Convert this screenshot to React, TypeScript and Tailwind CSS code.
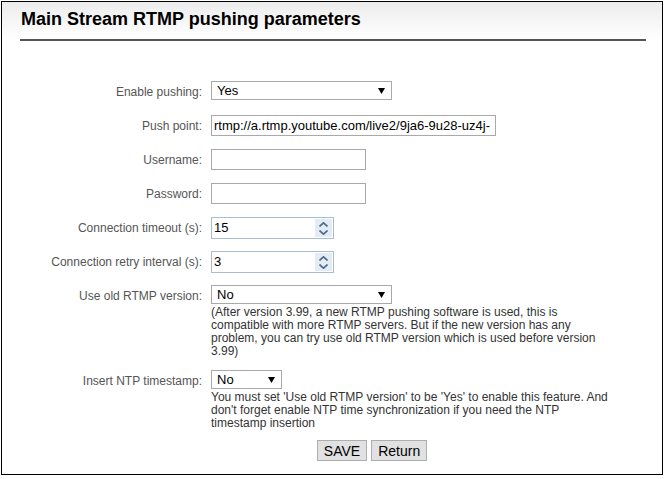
import React from 'react';

function Caret() {
  return (
    <svg width="7" height="6" viewBox="0 0 7 6" className="shrink-0">
      <path d="M0 0 H7 L3.5 6 Z" fill="#000" />
    </svg>
  );
}

function FakeSelect({ value, width }: { value: string; width: string }) {
  return (
    <div
      className={`${width} h-[19px] border border-[#a9a9a9] bg-white flex items-center justify-between pl-[5px] pr-[6px] text-[13px] text-black`}
    >
      <span className="leading-none">{value}</span>
      <Caret />
    </div>
  );
}

function NumberBox({ value }: { value: string }) {
  return (
    <div className="w-[123px] h-[22px] border border-[#a9bcd0] bg-white flex text-[13px] text-black">
      <div className="flex-1 flex items-center pl-[2px]">{value}</div>
      <div className="w-[17px] my-[1px] mr-[1px] bg-[#e3ebf5] flex flex-col items-center justify-center gap-[3px]">
        <svg width="9" height="5" viewBox="0 0 9 5">
          <path d="M0.5 4.5 L4.5 0.8 L8.5 4.5" stroke="#4e6a8c" strokeWidth="1.6" fill="none" />
        </svg>
        <svg width="9" height="5" viewBox="0 0 9 5">
          <path d="M0.5 0.5 L4.5 4.2 L8.5 0.5" stroke="#4e6a8c" strokeWidth="1.6" fill="none" />
        </svg>
      </div>
    </div>
  );
}

function TextBox({ value, width }: { value?: string; width: string }) {
  return (
    <div className={`${width} h-[21px] border border-[#a9a9a9] bg-white overflow-hidden flex items-center pl-[2px] text-[13px] text-black whitespace-nowrap`}>
      {value}
    </div>
  );
}

function Row({ label, children, className = '' }: { label: string; children: React.ReactNode; className?: string }) {
  return (
    <div className={`flex ${className}`}>
      <div className="w-[201px] shrink-0 text-right text-[12px] text-[#555] pr-[1px] pt-[2px]">{label}</div>
      <div className="ml-[8px]">{children}</div>
    </div>
  );
}

export default function App() {
  return (
    <div className="w-[665px] h-[479px] bg-white pt-[1px] pl-[1px]" style={{ fontFamily: '"Liberation Sans", Arial, sans-serif' }}>
      <div className="w-[662px] h-[474px] border border-black flex flex-col">
        <div className="bg-gradient-to-b from-[#ececec] to-white h-[37px] pl-[19px] pr-[16px] pt-[7px]">
          <h1 className="text-[18px] font-bold text-black leading-[20px]">Main Stream RTMP pushing parameters</h1>
        </div>
        <div className="mx-[18px] mr-[16px] h-[2px] bg-[#555]" />

        <div className="mt-[40px] flex flex-col">
          <Row label="Enable pushing:" className="h-[34px]">
            <FakeSelect value="Yes" width="w-[181px]" />
          </Row>
          <Row label="Push point:" className="h-[34px]">
            <TextBox value="rtmp://a.rtmp.youtube.com/live2/9ja6-9u28-uz4j-" width="w-[285px]" />
          </Row>
          <Row label="Username:" className="h-[34px]">
            <TextBox width="w-[155px]" />
          </Row>
          <Row label="Password:" className="h-[34px]">
            <TextBox width="w-[155px]" />
          </Row>
          <Row label="Connection timeout (s):" className="h-[34px]">
            <NumberBox value="15" />
          </Row>
          <Row label="Connection retry interval (s):" className="h-[34px]">
            <NumberBox value="3" />
          </Row>
          <Row label="Use old RTMP version:">
            <FakeSelect value="No" width="w-[181px]" />
            <p className="text-[12px] leading-[13px] text-[#333] mt-[2px] whitespace-nowrap">
              (After version 3.99, a new RTMP pushing software is used, this is
              <br />
              compatible with more RTMP servers. But if the new version has any
              <br />
              problem, you can try use old RTMP version which is used before version
              <br />
              3.99)
            </p>
          </Row>
          <Row label="Insert NTP timestamp:" className="mt-[12px]">
            <FakeSelect value="No" width="w-[71px]" />
            <p className="text-[12px] leading-[13px] text-[#333] mt-[2px] whitespace-nowrap">
              You must set 'Use old RTMP version' to be 'Yes' to enable this feature. And
              <br />
              don't forget enable NTP time synchronization if you need the NTP
              <br />
              timestamp insertion
            </p>
          </Row>
          <div className="flex justify-center gap-[4px] mt-[10px] pl-[80px]">
            <button className="h-[21px] px-[6px] bg-[#e1e1e1] border border-[#adadad] text-[14px] text-black leading-none">SAVE</button>
            <button className="h-[21px] px-[6px] bg-[#e1e1e1] border border-[#adadad] text-[14px] text-black leading-none">Return</button>
          </div>
        </div>
      </div>
    </div>
  );
}
